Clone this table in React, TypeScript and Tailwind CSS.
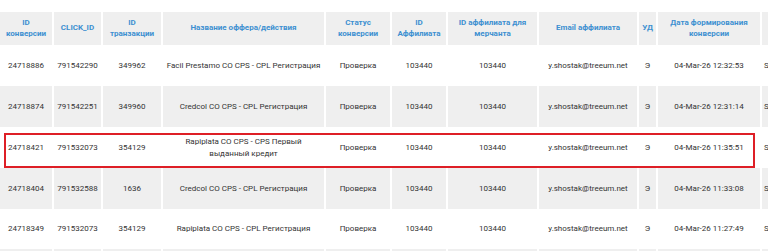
import React from "react";

type Row = {
    conv: string;
    click: string;
    tx: string;
    offer: string;
    status: string;
    aff: string;
    merchAff: string;
    email: string;
    ud: string;
    date: string;
    last: string;
};

const rows: Row[] = [
    { conv: "24718886", click: "791542290", tx: "349962", offer: "Facil Prestamo CO CPS - CPL Регистрация", status: "Проверка", aff: "103440", merchAff: "103440", email: "y.shostak@treeum.net", ud: "Э", date: "04-Mar-26 12:32:53", last: "Sale" },
    { conv: "24718874", click: "791542251", tx: "349960", offer: "Credcol CO CPS - CPL Регистрация", status: "Проверка", aff: "103440", merchAff: "103440", email: "y.shostak@treeum.net", ud: "Э", date: "04-Mar-26 12:31:14", last: "Sale" },
    { conv: "24718421", click: "791532073", tx: "354129", offer: "Rapiplata CO CPS - CPS Первый выданный кредит", status: "Проверка", aff: "103440", merchAff: "103440", email: "y.shostak@treeum.net", ud: "Э", date: "04-Mar-26 11:35:51", last: "Sale" },
    { conv: "24718404", click: "791532588", tx: "1636", offer: "Credcol CO CPS - CPL Регистрация", status: "Проверка", aff: "103440", merchAff: "103440", email: "y.shostak@treeum.net", ud: "Э", date: "04-Mar-26 11:33:08", last: "Sale" },
    { conv: "24718349", click: "791532073", tx: "354129", offer: "Rapiplata CO CPS - CPL Регистрация", status: "Проверка", aff: "103440", merchAff: "103440", email: "y.shostak@treeum.net", ud: "Э", date: "04-Mar-26 11:27:49", last: "Sale" },
];

const grid = "grid grid-cols-[52px_47px_58px_161px_64px_54px_89px_98px_17px_102px_60px] gap-x-[2px]";

export default function App() {
    return (
        <div className="w-[768px] h-[251px] overflow-hidden bg-white pt-[12px] font-['Roboto',sans-serif] text-[8px]">
            <div className="relative w-[900px]">
                {/* header */}
                <div className={`${grid} h-[33px] font-bold text-[#3d8fd1] leading-[10.5px]`}>
                    {["ID конверсии", "CLICK_ID", "ID транзакции", "Название оффера/действия", "Статус конверсии", "ID Аффилиата", "ID аффилиата для мерчанта", "Email аффилиата", "УД", "Дата формирования конверсии", ""].map((h, i) => (
                        <div key={i} className="bg-[#efefef] flex items-center justify-center text-center px-[4px]">
                            {h}
                        </div>
                    ))}
                </div>

                {rows.map((r, i) => {
                    const cells = [r.conv, r.click, r.tx, r.offer, r.status, r.aff, r.merchAff, r.email, r.ud, r.date];
                    const bg = i % 2 === 1 ? "bg-[#efefef]" : "bg-white";
                    return (
                        <div key={r.conv} className={`${grid} ${i === 4 ? "h-[40px]" : "h-[41px]"} text-[#333] leading-[11.5px]`}>
                            {cells.map((c, j) => (
                                <div
                                    key={j}
                                    className={`flex items-center justify-center text-center ${j === 3 ? "px-[2px]" : "px-[1px]"} ${bg}`}
                                >
                                    {c}
                                </div>
                            ))}
                            <div className={`flex items-center pl-[2px] ${bg}`}>{r.last}</div>
                        </div>
                    );
                })}
                <div className={`${grid} h-[10px]`}>
                    {Array.from({ length: 11 }).map((_, j) => (
                        <div key={j} className="bg-[#efefef]" />
                    ))}
                </div>

                {/* highlight frame drawn over the third row */}
                <div className="absolute left-[4px] top-[121px] w-[751px] h-[35px] border-2 border-[#de1f26] pointer-events-none" />
            </div>
        </div>
    );
}
